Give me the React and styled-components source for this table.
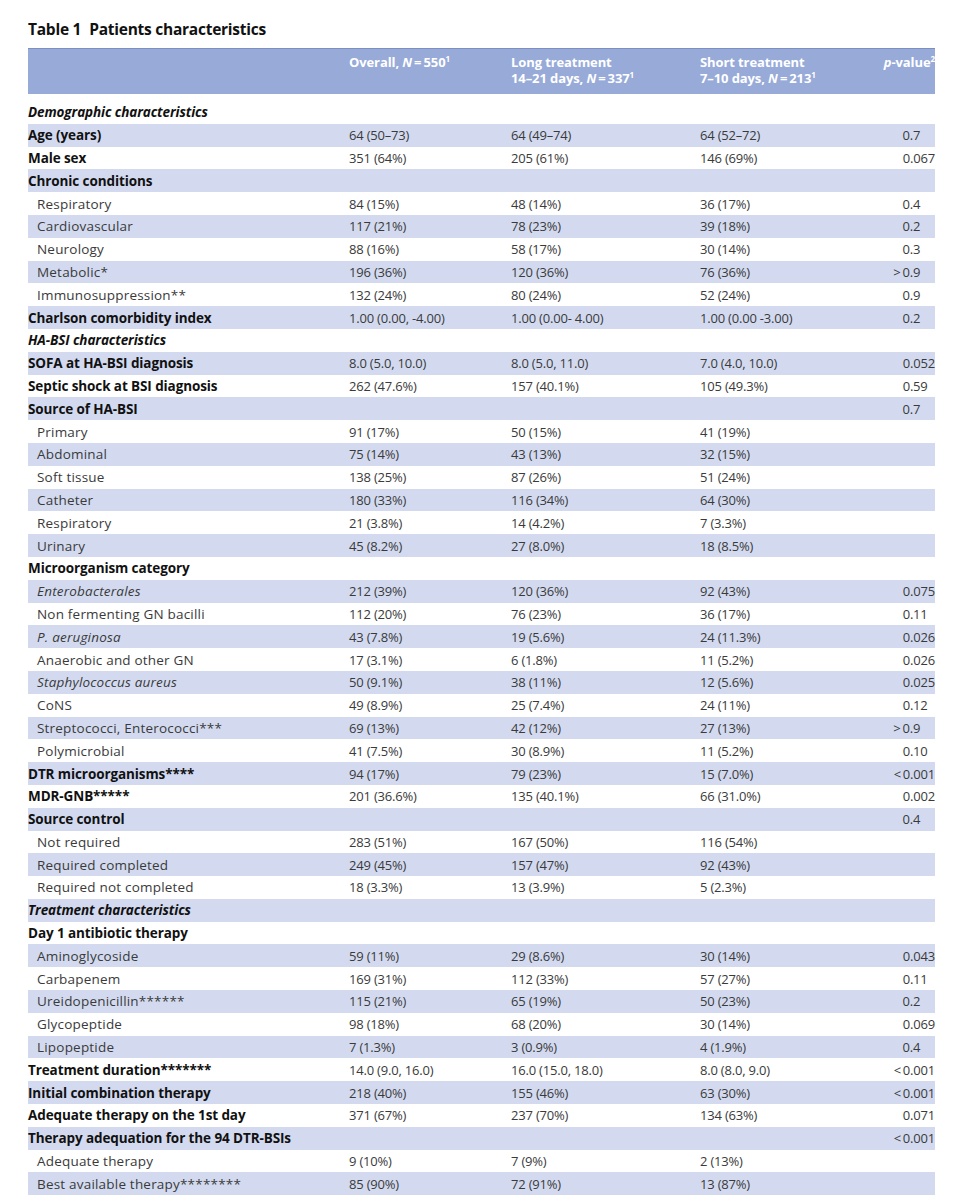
import React from "react";
import styled, { createGlobalStyle } from "styled-components";

const GlobalStyle = createGlobalStyle`
  body {
    margin: 0;
    background: #fff;
    font-family: "Open Sans", "Liberation Sans", sans-serif;
  }
`;

const Page = styled.div`
  width: 980px;
  padding: 19px 45px 0 28px;
  box-sizing: border-box;
`;

const Title = styled.h1`
  margin: 0 0 9px;
  font-size: 15.5px;
  font-weight: 700;
  color: #111;
  line-height: 20px;
  letter-spacing: -0.25px;

  span {
    margin-right: 8px;
  }
`;

const Grid = `
  display: grid;
  grid-template-columns: 321px 162px 189px 1fr 90px;
  width: 907px;
`;

const Header = styled.div`
  ${Grid}
  height: 46px;
  background: #97aad8;
  border-top: 1.5px solid #7b8fc2;
  box-sizing: border-box;
  padding-top: 5px;
  margin-bottom: 7px;
  color: #fff;
  font-weight: 700;
  font-size: 13px;
  line-height: 16px;
  letter-spacing: -0.1px;
`;

const HeadCell = styled.div`
  text-align: ${(p) => (p.$right ? "right" : "left")};

  sup {
    font-size: 8px;
    vertical-align: 5px;
    line-height: 0;
  }
`;

const Row = styled.div`
  ${Grid}
  height: 22.8px;
  align-items: center;
  background: ${(p) => (p.$shaded ? "#d3daf0" : "#fff")};
  font-size: 13px;
  color: #3a3a3a;
  letter-spacing: -0.2px;
  white-space: nowrap;
`;

const Label = styled.div`
  padding-left: ${(p) => (p.$sub ? "9px" : "0")};
  font-size: 13.5px;
  font-weight: ${(p) => (p.$bold ? 700 : 400)};
  font-style: ${(p) => (p.$italic ? "italic" : "normal")};
  letter-spacing: ${(p) => (p.$bold ? "-0.1px" : "0.2px")};
  color: ${(p) => (p.$bold ? "#111" : "#3a3a3a")};
`;

const Value = styled.div``;

const PValue = styled.div`
  text-align: right;
  padding-right: ${(p) => p.$pad}ch;
`;

// type: sec = bold italic section, b = bold, s = sub row, si = italic sub row
const rows = [
  ["sec", "Demographic characteristics"],
  ["b", "Age (years)", "64 (50–73)", "64 (49–74)", "64 (52–72)", "0.7"],
  ["b", "Male sex", "351 (64%)", "205 (61%)", "146 (69%)", "0.067"],
  ["b", "Chronic conditions"],
  ["s", "Respiratory", "84 (15%)", "48 (14%)", "36 (17%)", "0.4"],
  ["s", "Cardiovascular", "117 (21%)", "78 (23%)", "39 (18%)", "0.2"],
  ["s", "Neurology", "88 (16%)", "58 (17%)", "30 (14%)", "0.3"],
  ["s", "Metabolic*", "196 (36%)", "120 (36%)", "76 (36%)", ">\u20090.9"],
  ["s", "Immunosuppression**", "132 (24%)", "80 (24%)", "52 (24%)", "0.9"],
  ["b", "Charlson comorbidity index", "1.00 (0.00, -4.00)", "1.00 (0.00- 4.00)", "1.00 (0.00 -3.00)", "0.2"],
  ["sec", "HA-BSI characteristics"],
  ["b", "SOFA at HA-BSI diagnosis", "8.0 (5.0, 10.0)", "8.0 (5.0, 11.0)", "7.0 (4.0, 10.0)", "0.052"],
  ["b", "Septic shock at BSI diagnosis", "262 (47.6%)", "157 (40.1%)", "105 (49.3%)", "0.59"],
  ["b", "Source of HA-BSI", "", "", "", "0.7"],
  ["s", "Primary", "91 (17%)", "50 (15%)", "41 (19%)"],
  ["s", "Abdominal", "75 (14%)", "43 (13%)", "32 (15%)"],
  ["s", "Soft tissue", "138 (25%)", "87 (26%)", "51 (24%)"],
  ["s", "Catheter", "180 (33%)", "116 (34%)", "64 (30%)"],
  ["s", "Respiratory", "21 (3.8%)", "14 (4.2%)", "7 (3.3%)"],
  ["s", "Urinary", "45 (8.2%)", "27 (8.0%)", "18 (8.5%)"],
  ["b", "Microorganism category"],
  ["si", "Enterobacterales", "212 (39%)", "120 (36%)", "92 (43%)", "0.075"],
  ["s", "Non fermenting GN bacilli", "112 (20%)", "76 (23%)", "36 (17%)", "0.11"],
  ["si", "P. aeruginosa", "43 (7.8%)", "19 (5.6%)", "24 (11.3%)", "0.026"],
  ["s", "Anaerobic and other GN", "17 (3.1%)", "6 (1.8%)", "11 (5.2%)", "0.026"],
  ["si", "Staphylococcus aureus", "50 (9.1%)", "38 (11%)", "12 (5.6%)", "0.025"],
  ["s", "CoNS", "49 (8.9%)", "25 (7.4%)", "24 (11%)", "0.12"],
  ["s", "Streptococci, Enterococci***", "69 (13%)", "42 (12%)", "27 (13%)", ">\u20090.9"],
  ["s", "Polymicrobial", "41 (7.5%)", "30 (8.9%)", "11 (5.2%)", "0.10"],
  ["b", "DTR microorganisms****", "94 (17%)", "79 (23%)", "15 (7.0%)", "<\u20090.001"],
  ["b", "MDR-GNB*****", "201 (36.6%)", "135 (40.1%)", "66 (31.0%)", "0.002"],
  ["b", "Source control", "", "", "", "0.4"],
  ["s", "Not required", "283 (51%)", "167 (50%)", "116 (54%)"],
  ["s", "Required completed", "249 (45%)", "157 (47%)", "92 (43%)"],
  ["s", "Required not completed", "18 (3.3%)", "13 (3.9%)", "5 (2.3%)"],
  ["sec", "Treatment characteristics"],
  ["b", "Day 1 antibiotic therapy"],
  ["s", "Aminoglycoside", "59 (11%)", "29 (8.6%)", "30 (14%)", "0.043"],
  ["s", "Carbapenem", "169 (31%)", "112 (33%)", "57 (27%)", "0.11"],
  ["s", "Ureidopenicillin******", "115 (21%)", "65 (19%)", "50 (23%)", "0.2"],
  ["s", "Glycopeptide", "98 (18%)", "68 (20%)", "30 (14%)", "0.069"],
  ["s", "Lipopeptide", "7 (1.3%)", "3 (0.9%)", "4 (1.9%)", "0.4"],
  ["b", "Treatment duration*******", "14.0 (9.0, 16.0)", "16.0 (15.0, 18.0)", "8.0 (8.0, 9.0)", "<\u20090.001"],
  ["b", "Initial combination therapy", "218 (40%)", "155 (46%)", "63 (30%)", "<\u20090.001"],
  ["b", "Adequate therapy on the 1st day", "371 (67%)", "237 (70%)", "134 (63%)", "0.071"],
  ["b", "Therapy adequation for the 94 DTR-BSIs", "", "", "", "<\u20090.001"],
  ["s", "Adequate therapy", "9 (10%)", "7 (9%)", "2 (13%)"],
  ["s", "Best available therapy********", "85 (90%)", "72 (91%)", "13 (87%)"],
];

// p-values line up on the decimal point
const decimalPad = (v) => {
  if (!v) return 0;
  const d = v.split(".")[1] || "";
  return Math.max(0, 3 - d.length);
};

const App = () => {
  return (
    <Page>
      <GlobalStyle />
      <Title>
        <span>Table 1</span>Patients characteristics
      </Title>
      <Header>
        <HeadCell />
        <HeadCell>
          Overall, <i>N</i>&thinsp;=&thinsp;550<sup>1</sup>
        </HeadCell>
        <HeadCell>
          Long treatment
          <br />
          14–21 days, <i>N</i>&thinsp;=&thinsp;337<sup>1</sup>
        </HeadCell>
        <HeadCell>
          Short treatment
          <br />
          7–10 days, <i>N</i>&thinsp;=&thinsp;213<sup>1</sup>
        </HeadCell>
        <HeadCell $right>
          <i>p</i>-value<sup>2</sup>
        </HeadCell>
      </Header>
      {rows.map(([type, label, a, b, c, p], i) => (
        <Row key={i} $shaded={i % 2 === 1}>
          <Label
            $bold={type === "b" || type === "sec"}
            $italic={type === "sec" || type === "si"}
            $sub={type === "s" || type === "si"}
          >
            {label}
          </Label>
          <Value>{a}</Value>
          <Value>{b}</Value>
          <Value>{c}</Value>
          <PValue $pad={decimalPad(p)}>{p}</PValue>
        </Row>
      ))}
    </Page>
  );
};

export default App;
